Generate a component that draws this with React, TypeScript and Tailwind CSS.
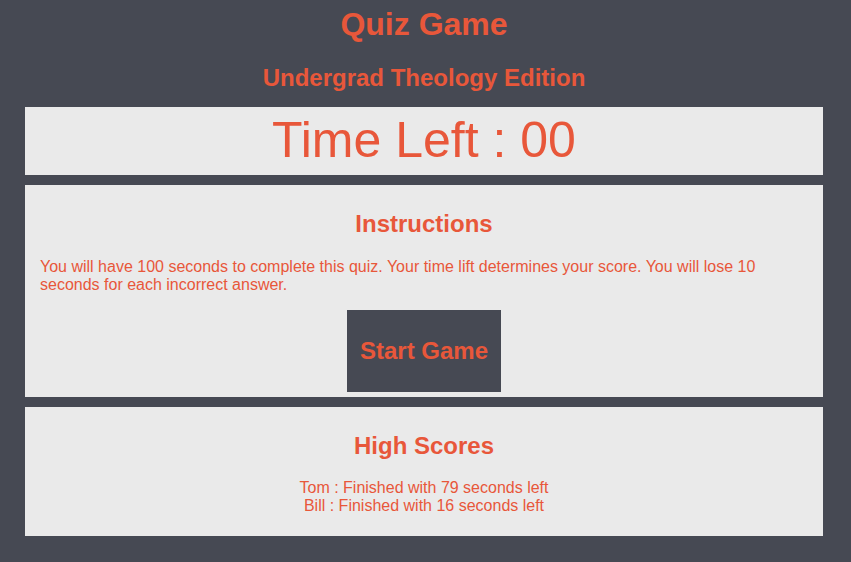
import React from 'react';

const HIGH_SCORES = [
  { name: 'Tom', seconds: 79 },
  { name: 'Bill', seconds: 16 },
];

export default function App() {
  return (
    <div className="min-h-screen bg-[#464953] font-['Liberation_Sans',Arial,sans-serif] text-[#e8573a]">
      <div className="mr-[3px]">
        <header className="text-center">
          <h1 className="pt-[6px] text-[32px] leading-[37px] font-bold">Quiz Game</h1>
          <h2 className="mt-[21px] text-[24px] leading-[28px] font-bold">Undergrad Theology Edition</h2>
        </header>

        <div className="mt-[15px] flex flex-col gap-[10px] px-[25px] pb-[25px]">
          <div className="bg-[#eaeaea] pt-[4px] pb-[6px] text-center text-[50px] leading-[58px]">
            Time Left : 00
          </div>

          <div className="bg-[#eaeaea] px-[15px] py-[5px]">
            <h2 className="mt-[20px] text-center text-[24px] leading-[28px] font-bold">Instructions</h2>
            <p className="mt-[20px] text-[16px] leading-[18px]">
              You will have 100 seconds to complete this quiz. Your time lift determines your score. You will lose 10
              seconds for each incorrect answer.
            </p>
            <div className="mt-[16px] flex justify-center">
              <button className="h-[82px] w-[154px] bg-[#464953] text-[24px] font-bold text-[#e8573a]">
                Start Game
              </button>
            </div>
          </div>

          <div className="bg-[#eaeaea] px-[15px] pt-[5px] pb-[21px] text-center">
            <h2 className="mt-[20px] text-[24px] leading-[28px] font-bold">High Scores</h2>
            <div className="mt-[19px] text-[16px] leading-[18px]">
              {HIGH_SCORES.map((score) => (
                <p key={score.name}>
                  {score.name} : Finished with {score.seconds} seconds left
                </p>
              ))}
            </div>
          </div>
        </div>
      </div>
    </div>
  );
}
